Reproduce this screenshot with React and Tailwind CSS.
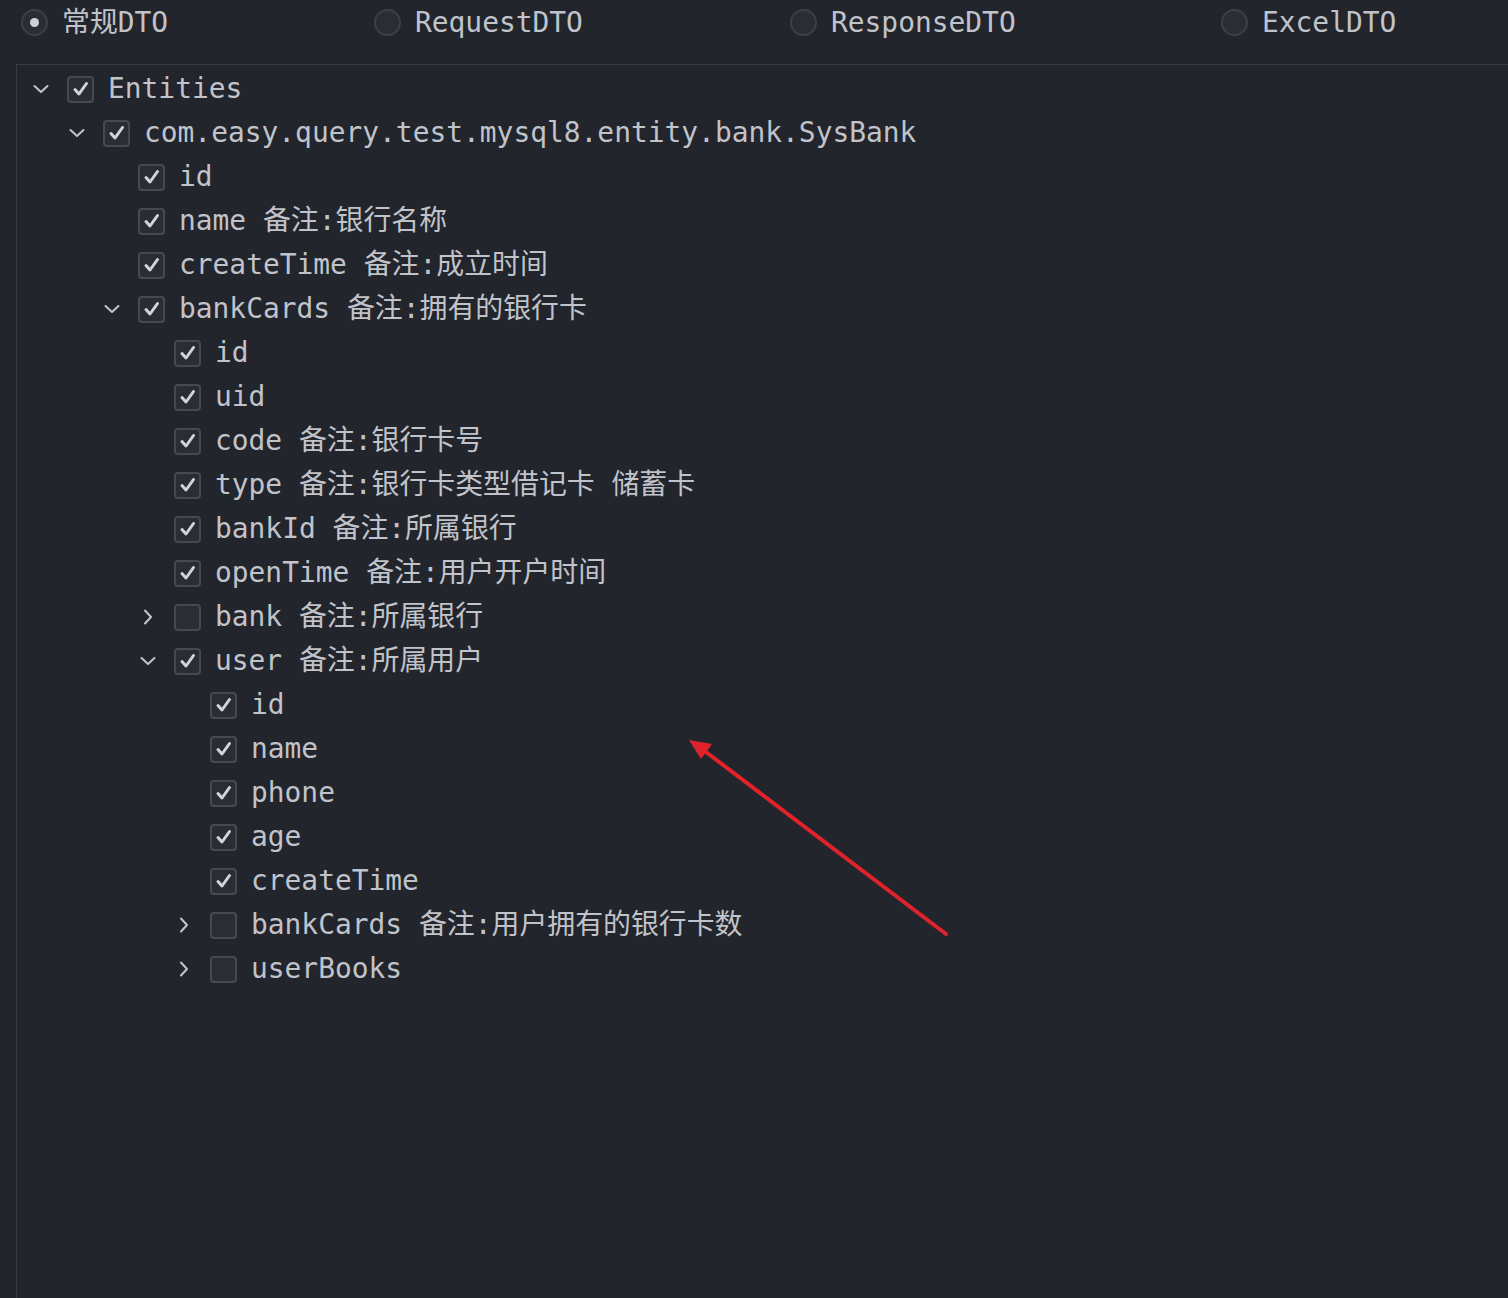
import React from 'react';

const tree = [
  { level: 0, label: 'Entities', checked: true, arrow: 'down' },
  { level: 1, label: 'com.easy.query.test.mysql8.entity.bank.SysBank', checked: true, arrow: 'down' },
  { level: 2, label: 'id', checked: true },
  { level: 2, label: 'name', note: '备注:银行名称', checked: true },
  { level: 2, label: 'createTime', note: '备注:成立时间', checked: true },
  { level: 2, label: 'bankCards', note: '备注:拥有的银行卡', checked: true, arrow: 'down' },
  { level: 3, label: 'id', checked: true },
  { level: 3, label: 'uid', checked: true },
  { level: 3, label: 'code', note: '备注:银行卡号', checked: true },
  { level: 3, label: 'type', note: '备注:银行卡类型借记卡 储蓄卡', checked: true },
  { level: 3, label: 'bankId', note: '备注:所属银行', checked: true },
  { level: 3, label: 'openTime', note: '备注:用户开户时间', checked: true },
  { level: 3, label: 'bank', note: '备注:所属银行', checked: false, arrow: 'right' },
  { level: 3, label: 'user', note: '备注:所属用户', checked: true, arrow: 'down' },
  { level: 4, label: 'id', checked: true },
  { level: 4, label: 'name', checked: true },
  { level: 4, label: 'phone', checked: true },
  { level: 4, label: 'age', checked: true },
  { level: 4, label: 'createTime', checked: true },
  { level: 4, label: 'bankCards', note: '备注:用户拥有的银行卡数', checked: false, arrow: 'right' },
  { level: 4, label: 'userBooks', checked: false, arrow: 'right' },
];

const indents = ['pl-[13px]', 'pl-[49px]', 'pl-[84px]', 'pl-[120px]', 'pl-[156px]'];

function Chevron({ dir }) {
  if (!dir) return <span className="w-[22px]" />;
  return (
    <span className="w-[22px] flex items-center justify-center">
      <svg width="18" height="18" viewBox="0 0 18 18" fill="none" stroke="#c3c5cc" strokeWidth="2" strokeLinecap="round" strokeLinejoin="round">
        {dir === 'down' ? <polyline points="2.5,6 9,12 15.5,6" /> : <polyline points="6,2.5 12,9 6,15.5" />}
      </svg>
    </span>
  );
}

function Checkbox({ checked }) {
  return (
    <span className="w-[27px] h-[27px] rounded-[4px] border-2 border-[#464950] bg-[#2a2d34] flex items-center justify-center">
      {checked && (
        <svg width="20" height="20" viewBox="0 0 20 20" fill="none" stroke="#d2d4da" strokeWidth="3" strokeLinecap="round" strokeLinejoin="round">
          <polyline points="4,10.5 8,15 15.5,4.5" />
        </svg>
      )}
    </span>
  );
}

function Radio({ selected, label, className }) {
  return (
    <div className={'flex items-center ' + className}>
      <span className="w-[27px] h-[27px] rounded-full border-2 border-[#3d4047] bg-[#2a2d33] flex items-center justify-center">
        {selected && <span className="w-[9px] h-[9px] rounded-full bg-[#cfd1d6]" />}
      </span>
      <span className="ml-[14px]">{label}</span>
    </div>
  );
}

export default function App() {
  return (
    <div
      className="relative w-[1508px] h-[1298px] bg-[#22252c] text-[#c1c3ca] text-[27.9px] leading-none overflow-hidden flex flex-col"
      style={{ fontFamily: '"DejaVu Sans Mono", "Noto Sans CJK SC", monospace' }}
    >
      <div className="h-[45px] flex items-center shrink-0">
        <Radio selected label="常规DTO" className="ml-[21px] w-[353px]" />
        <Radio label="RequestDTO" className="w-[416px]" />
        <Radio label="ResponseDTO" className="w-[431px]" />
        <Radio label="ExcelDTO" />
      </div>
      <div className="mt-[19px] ml-[16px] flex-1 border-l border-t border-[#393c43] pt-[2px]">
        {tree.map((row, i) => (
          <div key={i} className={'h-[44px] flex items-center ' + indents[row.level]}>
            <Chevron dir={row.arrow} />
            <span className="ml-[15px]"><Checkbox checked={row.checked} /></span>
            <span className="ml-[14px] whitespace-pre">
              {row.label}
              {row.note && <span>{' ' + row.note}</span>}
            </span>
          </div>
        ))}
      </div>
      <svg className="absolute left-0 top-0 pointer-events-none" width="1508" height="1298">
        <line x1="946" y1="934" x2="706" y2="752" stroke="#e0222b" strokeWidth="4" strokeLinecap="round" />
        <polygon points="689,740 712,744 701,759" fill="#e0222b" />
      </svg>
    </div>
  );
}
